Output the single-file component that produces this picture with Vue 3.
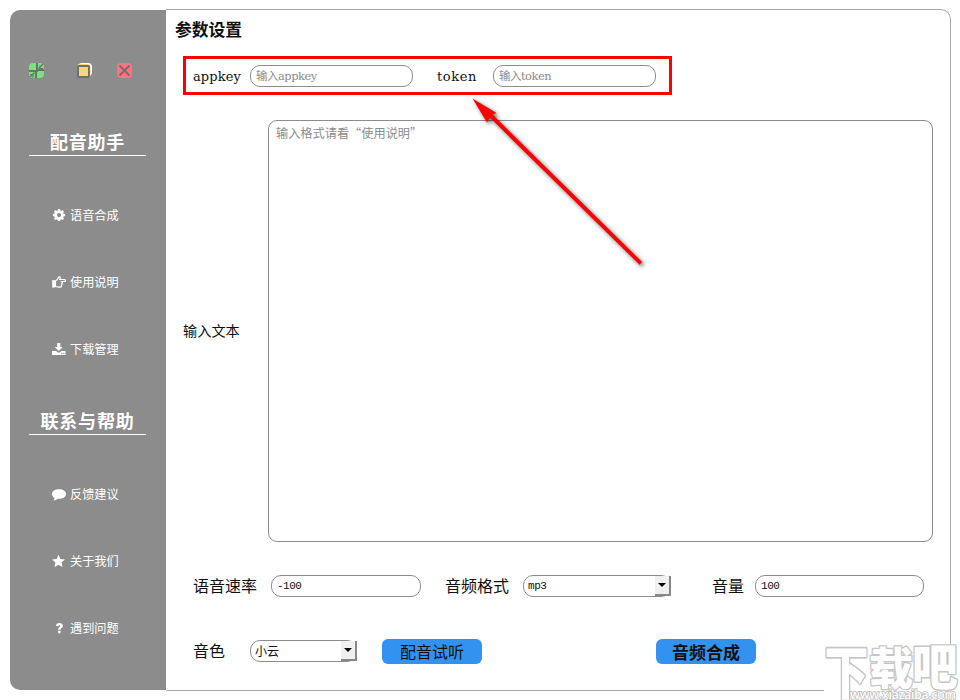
<template>
  <div class="window">
    <aside class="sidebar">
      <div class="window-buttons">
        <svg class="win-btn" viewBox="0 0 15 15">
          <rect width="15" height="15" rx="4" fill="#79e27b" />
          <path d="M7 0h2v6h6v2H9v1H8v6H6V9H0V7h7z" fill="#707070" />
          <path d="M14 1L9.5 5.5M11 2.5v3h3M1 14l4.5-4.5M1 11.5h3v3" fill="none" stroke="#707070" stroke-width="1.2" />
        </svg>
        <svg class="win-btn middle" viewBox="0 0 15 15">
          <rect x="1" width="14" height="13" rx="4" fill="#fff" />
          <rect y="1" width="13.5" height="14" rx="3" fill="#f8d57e" />
          <rect x="1" y="3" width="11" height="11" rx="0.5" fill="#f8d57e" stroke="#707070" stroke-width="2" />
        </svg>
        <svg class="win-btn" viewBox="0 0 15 15">
          <rect width="15" height="15" rx="4" fill="#fa7482" />
          <path d="M2.5 2.5l10 10M12.5 2.5l-10 10" stroke="#707070" stroke-width="1.8" />
        </svg>
      </div>

      <template v-for="group in menu" :key="group.title">
        <h2 class="menu-title">{{ group.title }}</h2>
        <nav class="menu">
          <a v-for="item in group.items" :key="item.text" class="menu-item">
            <svg class="menu-icon" viewBox="0 0 14 14">
              <path :d="icons[item.icon]" :class="{ outline: item.icon === 'hand' }" fill-rule="evenodd" />
              <rect v-if="item.icon === 'hand'" x="0.2" y="5.2" width="3" height="7.4" />
            </svg>
            <span>{{ item.text }}</span>
          </a>
        </nav>
      </template>
    </aside>

    <main class="panel">
      <h1 class="panel-title">参数设置</h1>

      <div class="keys">
        <label class="latin">appkey</label>
        <input v-model="appkey" class="field key-input" placeholder="输入appkey" />
        <label class="latin token">token</label>
        <input v-model="token" class="field key-input" placeholder="输入token" />
      </div>

      <div class="text-row">
        <label>输入文本</label>
        <textarea v-model="content" class="content" placeholder="输入格式请看“使用说明”"></textarea>
      </div>

      <div class="row options">
        <label>语音速率</label>
        <input v-model="rate" class="field rate" />
        <label class="format-label">音频格式</label>
        <div class="field select format">
          <span>mp3</span>
          <i class="drop"></i>
        </div>
        <label class="volume-label">音量</label>
        <input v-model="volume" class="field volume" />
      </div>

      <div class="row actions">
        <label>音色</label>
        <div class="field select voice">
          <span>小云</span>
          <i class="drop"></i>
        </div>
        <button class="btn listen">配音试听</button>
        <button class="btn compose">音频合成</button>
      </div>
    </main>

    <svg class="arrow" viewBox="0 0 190 190">
      <path d="M7.5 8.5L31.5 23 27.6 24.6 177.2 172 174.6 174.8 24.8 27.6 22 32.6z" fill="#f00" />
    </svg>

    <svg class="watermark" viewBox="0 0 136 56">
      <rect width="136" height="56" fill="#fff" />
      <g class="mark">
        <text transform="translate(0.5 50) scale(1 1.32)">下</text>
        <text transform="translate(45 41) scale(1 1.02)">载</text>
        <text transform="translate(88 40.5) scale(1.04 1.1)">吧</text>
      </g>
      <text class="site" x="26" y="54.5" textLength="106">www.xiazaiba.com</text>
    </svg>
  </div>
</template>

<script setup>
import { ref } from 'vue'

const appkey = ref('')
const token = ref('')
const content = ref('')
const rate = ref('-100')
const volume = ref('100')

const menu = [
  {
    title: '配音助手',
    items: [
      { icon: 'gear', text: '语音合成' },
      { icon: 'hand', text: '使用说明' },
      { icon: 'download', text: '下载管理' }
    ]
  },
  {
    title: '联系与帮助',
    items: [
      { icon: 'comment', text: '反馈建议' },
      { icon: 'star', text: '关于我们' },
      { icon: 'question', text: '遇到问题' }
    ]
  }
]

const icons = {
  gear: 'M6 1h2l.4 1.5.9.4 1.3-.8L12 3.500l-.8 1.300.4.9 1.500.400v2l-1.500.4-.4.9.8 1.300-1.400 1.400-1.300-.8-.9.400L8 13H6l-.4-1.300-.9-.4-1.300.8L2 10.700l.8-1.300-.4-.9L.9 8.100v-2l1.500-.4.4-.9L2 3.500l1.400-1.400 1.300.8.9-.4zM7 5a2.100 2.100 0 1 0 0 4.200 2.100 2.100 0 1 0 0-4.200z',
  hand: 'M3.5 5.8c1.6 0 2-2.2 3.4-3.9 1.4-.4 1.5.9.8 2.6h5c1.1 0 1.1 2 0 2H9.800c1 .6.8 1.600 0 1.900.5.8.2 1.500-.5 1.800.3.9-.1 1.700-1 1.900-1.800.1-3.100-.6-4.800-.6z',
  download: 'M5.2 1h3.2v4h2.5L6.8 9.1 2.7 5h2.5zM0 9h4.2l1.6 1.5h2L9.4 9h4.1v4H0zM9.3 11v1h1v-1zM11.4 11v1h1v-1z',
  comment: 'M7 2.2c4 0 7 2 7 4.8s-3 4.8-7 4.8l-1.4-.1c-1.2 1-2.7 1.6-4.3 1.7.8-.7 1.3-1.4 1.4-2.4C1 10.1 0 8.7 0 7c0-2.8 3-4.8 7-4.8z',
  star: 'M6.5.8l1.9 4.1 4.5.5-3.3 3.1.9 4.5-4-2.2-4 2.2.9-4.5L.1 5.4l4.5-.5z',
  question: 'M3.8 4.5C4.3 2.8 5.6 2 7.4 2c2 0 3.5 1.1 3.5 2.8 0 2.2-2.5 2.2-2.5 3.9H6.1c0-2.4 2.2-2.5 2.2-3.7 0-1.2-1.7-1.2-2.3.4zM6.1 9.8h2.4v2.4H6.1z'
}
</script>

<style>
body {
  background: #fff;
}
</style>

<style scoped>
* {
  box-sizing: border-box;
}
.window {
  position: relative;
  display: flex;
  align-items: flex-start;
  width: 960px;
  height: 700px;
  padding: 9px 9px 9px 10px;
  overflow: hidden;
  font-family: 'Noto Sans CJK SC', sans-serif;
  color: #111;
}

/* sidebar */
.sidebar {
  width: 156px;
  height: 680px;
  margin-top: 1px;
  padding: 53px 20px 0 19px;
  background: #8c8c8c;
  border-radius: 10px 0 0 10px;
  color: #fff;
}
.window-buttons {
  display: flex;
  height: 15px;
  margin-bottom: 52px;
}
.win-btn {
  width: 15px;
  height: 15px;
}
.middle {
  margin: 0 25px 0 33px;
}
.menu-title {
  height: 26px;
  margin: 0;
  border-bottom: 1px solid #fff;
  font-size: 18px;
  font-weight: 700;
  line-height: 23px;
  letter-spacing: 0.8px;
  text-align: center;
}
.menu {
  padding: 25px 0 27px;
}
.menu-item {
  display: flex;
  align-items: center;
  gap: 4px;
  height: 67px;
  padding-left: 23px;
  font-size: 12.2px;
}
.menu-icon {
  width: 14px;
  height: 14px;
  fill: #fff;
}
.outline {
  fill: none;
  stroke: #fff;
  stroke-width: 1.2;
}

/* right panel */
.panel {
  width: 785px;
  height: 682px;
  padding-right: 17px;
  border: 1px solid #aaa;
  border-left: 0;
  border-radius: 0 10px 10px 0;
}
.panel-title {
  height: 40px;
  margin: 0 0 6px 9px;
  font-size: 16.8px;
  font-weight: 700;
  line-height: 39px;
}
label {
  padding-bottom: 2px;
  font-size: 16px;
  white-space: nowrap;
}
.field {
  height: 22px;
  padding: 0 5px;
  border: 1px solid #8c8c8c;
  border-radius: 10px;
  background: #fff;
  color: #111;
  font-family: 'Liberation Mono', 'Noto Sans CJK SC', monospace;
  font-size: 11px;
  letter-spacing: -0.5px;
  outline: none;
}
.field::placeholder,
.content::placeholder {
  color: #8c8c8c;
  opacity: 1;
}
.keys {
  display: flex;
  align-items: center;
  width: 489px;
  height: 39px;
  margin-left: 17px;
  padding-left: 7px;
  border: 3px solid #f00;
}
.latin {
  width: 57px;
  padding: 2px 0 0;
  font-family: 'DejaVu Serif', serif;
  font-size: 13px;
  letter-spacing: 0.1px;
}
.token {
  width: 56px;
  margin-left: 24px;
  letter-spacing: 0.6px;
}
.key-input {
  width: 163px;
  font-family: 'DejaVu Serif', 'Noto Sans CJK SC', serif;
  font-size: 11.5px;
  letter-spacing: -0.5px;
}
.text-row {
  display: flex;
  align-items: center;
  margin: 25px 0 33px 17px;
}
.text-row label {
  width: 85px;
  font-size: 14.2px;
}
.content {
  display: block;
  width: 665px;
  height: 422px;
  padding: 3px 7px;
  border: 1px solid #8c8c8c;
  border-radius: 9px;
  font-family: 'Noto Sans CJK SC', sans-serif;
  font-size: 12.2px;
  line-height: 18px;
  resize: none;
  outline: none;
}
.row {
  display: flex;
  align-items: center;
  height: 22px;
  margin-left: 27px;
}
.rate {
  width: 150px;
  margin-left: 14px;
}
.format-label {
  margin-left: 24px;
}
.format {
  width: 148px;
  margin-left: 14px;
}
.volume-label {
  margin-left: 41px;
}
.volume {
  width: 169px;
  margin-left: 11px;
}
.select {
  display: flex;
  align-items: center;
  justify-content: space-between;
  padding: 0 0 0 4px;
}
.drop {
  display: flex;
  align-items: center;
  justify-content: center;
  width: 16px;
  height: 20px;
  margin-right: -1px;
  background: #f0f0f0;
  border-right: 2px solid #888;
  border-bottom: 2px solid #888;
}
.drop::before {
  content: '';
  border: 4px solid transparent;
  border-top-color: #000;
  border-bottom: 0;
}
.actions {
  height: 25px;
  margin-top: 42px;
}
.actions label {
  padding-bottom: 3px;
}
.voice {
  width: 107px;
  margin-left: 25px;
}
.actions .voice {
  margin-bottom: 1px;
}
.voice span {
  padding-bottom: 1px;
  font-size: 12px;
  letter-spacing: 0;
}
.btn {
  width: 100px;
  height: 25px;
  padding: 0;
  border: 0;
  border-radius: 6px;
  background: #3391f0;
  color: #111;
  font-family: inherit;
  font-size: 16px;
  line-height: 25px;
}
.listen {
  margin-left: 25px;
}
.compose {
  margin-left: 174px;
  font-size: 17px;
  font-weight: 700;
}

/* annotations above the window */
.arrow {
  position: absolute;
  left: 465px;
  top: 90px;
  width: 190px;
  height: 190px;
  filter: drop-shadow(2px 2px 2px rgba(0, 0, 0, 0.6));
  pointer-events: none;
}
.watermark {
  position: absolute;
  left: 824px;
  top: 644px;
  width: 136px;
  height: 56px;
  overflow: visible;
  pointer-events: none;
}
.mark text {
  fill: #fff;
  stroke: #c6c6c6;
  stroke-width: 2.6px;
  stroke-linejoin: round;
  paint-order: stroke;
  font-size: 44px;
  font-weight: 900;
}
.site {
  fill: #fff;
  stroke: #bbb;
  stroke-width: 1.6px;
  paint-order: stroke;
  font-family: 'Open Sans', sans-serif;
  font-size: 12px;
  font-weight: 600;
}
</style>
